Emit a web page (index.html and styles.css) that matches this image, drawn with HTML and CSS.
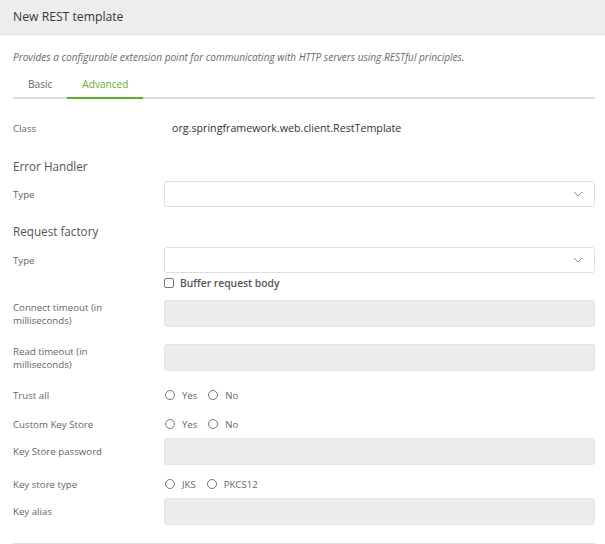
FILE: index.html
```html
<!DOCTYPE html>
<html>
<head>
<meta charset="utf-8">
<link rel="stylesheet" href="styles.css">
</head>
<body>
<div class="header">New REST template</div>
<div class="content">
  <p class="desc">Provides a configurable extension point for communicating with HTTP servers using RESTful principles.</p>
  <div class="tabs">
    <div class="tab">Basic</div>
    <div class="tab active">Advanced</div>
  </div>

  <div class="row r-class">
    <div class="label">Class</div>
    <div class="value">org.springframework.web.client.RestTemplate</div>
  </div>

  <h3 class="section s-first">Error Handler</h3>
  <div class="row r-sel1">
    <div class="label">Type</div>
    <div class="select"><svg class="chev" width="10" height="6" viewBox="0 0 10 6"><path d="M1 1 L5 5 L9 1" fill="none" stroke="#8a8a8a" stroke-width="1"/></svg></div>
  </div>

  <h3 class="section s-second">Request factory</h3>
  <div class="row r-sel2">
    <div class="label">Type</div>
    <div class="select"><svg class="chev" width="10" height="6" viewBox="0 0 10 6"><path d="M1 1 L5 5 L9 1" fill="none" stroke="#8a8a8a" stroke-width="1"/></svg></div>
  </div>
  <div class="row r-check">
    <div></div>
    <label class="check"><span class="box"></span>Buffer request body</label>
  </div>

  <div class="row top r-connect">
    <div class="label two">Connect timeout (in<br>milliseconds)</div>
    <div class="input"></div>
  </div>
  <div class="row top r-read">
    <div class="label two">Read timeout (in<br>milliseconds)</div>
    <div class="input"></div>
  </div>

  <div class="row r-trust">
    <div class="label">Trust all</div>
    <div class="radios"><span class="radio"><span class="dot"></span>Yes</span><span class="radio"><span class="dot"></span>No</span></div>
  </div>
  <div class="row r-custom">
    <div class="label">Custom Key Store</div>
    <div class="radios"><span class="radio"><span class="dot"></span>Yes</span><span class="radio"><span class="dot"></span>No</span></div>
  </div>
  <div class="row r-kspass">
    <div class="label">Key Store password</div>
    <div class="input"></div>
  </div>
  <div class="row r-kstype">
    <div class="label">Key store type</div>
    <div class="radios"><span class="radio"><span class="dot"></span>JKS</span><span class="radio"><span class="dot"></span>PKCS12</span></div>
  </div>
  <div class="row r-alias">
    <div class="label">Key alias</div>
    <div class="input"></div>
  </div>
  <div class="footer-line"></div>
</div>
</body>
</html>
```
FILE: styles.css
```css
* { box-sizing: border-box; }
html, body { margin: 0; padding: 0; background: #fff; }
body {
  font-family: "Open Sans", "Noto Sans", sans-serif;
  color: #333;
  width: 605px;
  overflow: hidden;
}
.header {
  height: 35px;
  background: #ededed;
  border-bottom: 1px solid #e2e2e2;
  padding: 0 13px;
  font-size: 12.2px;
  line-height: 33px;
  color: #383838;
}
.content { padding: 0 10px 0 13px; }
.desc {
  margin: 15px 0 0;
  font-size: 10.05px;
  line-height: 14px;
  font-style: italic;
  color: #6a6a6a;
}
.tabs {
  display: flex;
  margin-top: 7px;
  border-bottom: 2px solid #dcdcdc;
}
.tab {
  padding: 0 15px;
  font-size: 10.1px;
  line-height: 26px;
  color: #666;
  margin-bottom: -2px;
  border-bottom: 2px solid transparent;
}
.tab.active { color: #5fae2e; border-bottom-color: #5fae2e; }

.row {
  display: grid;
  grid-template-columns: 151px 1fr;
  align-items: center;
}
.row.top { align-items: start; }
.label {
  font-size: 9.7px;
  line-height: 13px;
  color: #666;
}
.label.two { line-height: 13px; padding-top: 0.5px; }
.value { font-size: 10.7px; line-height: 16px; color: #333; padding-left: 8px; }
.section {
  margin: 0;
  font-weight: normal;
  font-size: 11.7px;
  line-height: 18px;
  color: #555;
}
.select {
  height: 26px;
  border: 1px solid #dedede;
  border-radius: 3px;
  background: #fff;
  display: flex;
  align-items: center;
  justify-content: flex-end;
  padding-right: 11px;
}
.input {
  height: 27px;
  border: 1px solid #e4e4e4;
  border-radius: 3px;
  background: #ececec;
}
.check {
  display: flex;
  align-items: center;
  font-size: 10.3px;
  font-weight: 600;
  color: #555;
  line-height: 12px;
}
.box {
  width: 10px; height: 10px;
  border: 1px solid #777;
  border-radius: 2px;
  margin: 0 6px 0 0;
}
.radios { display: flex; align-items: center; height: 20px; }
.radio {
  display: flex;
  align-items: center;
  font-size: 9.6px;
  color: #666;
  margin-right: 10px;
}
.dot {
  width: 10px; height: 10px;
  border: 1px solid #777;
  border-radius: 50%;
  margin: 0 7px 0 1px;
}

.r-class { margin-top: 21px; }
.s-first { margin-top: 21px; }
.r-sel1 { margin-top: 6px; }
.s-second { margin-top: 15px; }
.r-sel2 { margin-top: 7px; }
.r-check { margin-top: 4px; }
.r-connect { margin-top: 11px; }
.r-read { margin-top: 17px; }
.r-trust { margin-top: 14px; }
.r-custom { margin-top: 9px; }
.r-kspass { margin-top: 4px; }
.r-kstype { margin-top: 9px; }
.r-alias { margin-top: 4px; }
.footer-line { margin-top: 18px; border-top: 1px solid #dcdcdc; }
```
